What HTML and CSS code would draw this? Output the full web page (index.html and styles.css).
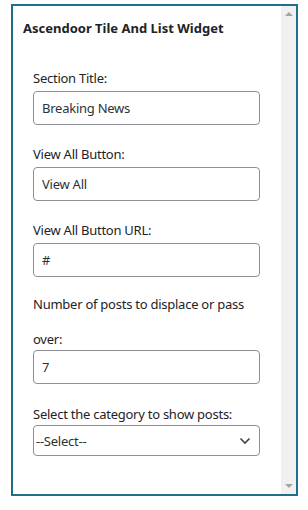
FILE: index.html
```html
<!DOCTYPE html>
<html lang="en">
  <head>
    <meta charset="UTF-8" />
    <meta name="viewport" content="width=device-width, initial-scale=1.0" />
    <title>Ascendoor Tile And List Widget</title>
    <link rel="stylesheet" href="styles.css">
  </head>
  <body>
    <div class="frame">
      <div class="widget">
        <h3>Ascendoor Tile And List Widget</h3>
        <form class="widget-form">
          <div class="field">
            <label for="sectionTitle">Section Title:</label>
            <input type="text" id="sectionTitle" value="Breaking News" />
          </div>
          <div class="field">
            <label for="viewAll">View All Button:</label>
            <input type="text" id="viewAll" value="View All" />
          </div>
          <div class="field">
            <label for="viewAllUrl">View All Button URL:</label>
            <input type="text" id="viewAllUrl" value="#" />
          </div>
          <div class="field field-offset">
            <label for="offset">Number of posts to displace or pass over:</label>
            <input type="number" id="offset" value="7" />
          </div>
          <div class="field field-select">
            <label for="category">Select the category to show posts:</label>
            <div class="select-wrap">
              <select id="category">
                <option>--Select--</option>
              </select>
              <svg class="chevron" width="12" height="8" viewBox="0 0 12 8">
                <path d="M1.5 1.5 L6 6 L10.5 1.5" fill="none" stroke="#3c434a" stroke-width="1.6" />
              </svg>
            </div>
          </div>
        </form>
      </div>
      <div class="scrollbar">
        <span class="arrow arrow-up"></span>
        <span class="arrow arrow-down"></span>
      </div>
    </div>
  </body>
</html>
```

FILE: styles.css
```css
* {
  box-sizing: border-box;
}
body {
  margin: 0;
  padding: 4px 0 0 11px;
  background: #fff;
  font-family: "Noto Sans", "Open Sans", Arial, sans-serif;
  font-size: 13px;
  color: #1d2327;
}
.frame {
  display: flex;
  width: 287px;
  height: 492px;
  border: 2px solid #1f6f8b;
  background: #fff;
}
.widget {
  flex: 1;
  padding: 13px 10px 0 10px;
}
.widget h3 {
  margin: 0;
  font-size: 13px;
  line-height: 18px;
  font-weight: 700;
}
.widget-form {
  padding: 12px 10px 0 10px;
  letter-spacing: -0.25px;
}
.field {
  margin-top: 20px;
}
.field label {
  display: block;
  line-height: 18px;
  margin-bottom: 4px;
}
.field input {
  display: block;
  width: 227px;
  height: 34px;
  padding: 0 8px;
  border: 1px solid #8c8f94;
  border-radius: 4px;
  font-family: inherit;
  font-size: 13px;
  letter-spacing: -0.25px;
  color: #2c3338;
  background: #fff;
}
.field input[type="number"] {
  -moz-appearance: textfield;
}
.field input::-webkit-inner-spin-button {
  -webkit-appearance: none;
}
.field-offset {
  margin-top: 10px;
}
.field-offset label {
  line-height: 35px;
  margin-bottom: -7px;
}
.field-select {
  margin-top: 21px;
}
.field-select label {
  margin-bottom: 2px;
}
.select-wrap {
  position: relative;
  width: 227px;
}
.select-wrap select {
  display: block;
  width: 100%;
  height: 31px;
  padding: 0 24px 0 2px;
  border: 1px solid #8c8f94;
  border-radius: 4px;
  background: #fff;
  font-family: inherit;
  font-size: 13px;
  letter-spacing: -0.25px;
  color: #2c3338;
  -webkit-appearance: none;
  appearance: none;
}
.chevron {
  position: absolute;
  right: 9px;
  top: 12px;
}
.scrollbar {
  width: 15px;
  background: #f0f0f0;
  display: flex;
  flex-direction: column;
  justify-content: space-between;
  align-items: center;
  padding: 6px 0 6px;
}
.arrow {
  width: 0;
  height: 0;
  border-left: 4px solid transparent;
  border-right: 4px solid transparent;
}
.arrow-up {
  border-bottom: 4px solid #a3a3a3;
}
.arrow-down {
  border-top: 4px solid #a3a3a3;
}
```
